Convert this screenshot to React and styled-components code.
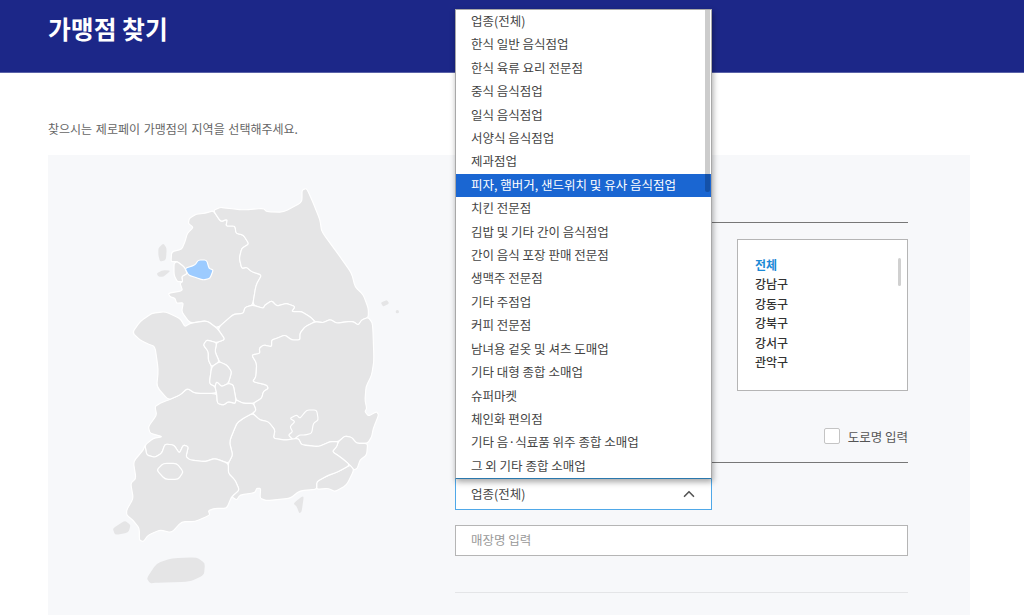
import styled, { createGlobalStyle } from "styled-components";
import { ChevronUp } from "lucide-react";

const Global = createGlobalStyle`
  html, body {
    margin: 0;
    height: 615px;
    overflow: hidden;
    background: #fff;
    font-family: "Noto Sans CJK KR", "Noto Sans", sans-serif;
  }
  * { box-sizing: border-box; }
`;

const Page = styled.div`
  width: 1024px;
  height: 615px;
  overflow: hidden;
`;

const Header = styled.header`
  height: 73px;
  padding: 10px 48px 0;
  background: #1c2788;
  border-bottom: 1px solid #5a62a8;
`;

const Title = styled.h1`
  margin: 0;
  font-size: 24.8px;
  line-height: 36px;
  font-weight: 700;
  color: #fff;
`;

const Intro = styled.p`
  margin: 0;
  padding: 46px 48px 0;
  height: 82px;
  font-size: 12px;
  line-height: 20px;
  word-spacing: 1px;
  color: #666;
`;

const Panel = styled.section`
  display: flex;
  width: 922px;
  height: 460px;
  margin-left: 48px;
  background: #f7f8fa;
`;

const MapColumn = styled.div`
  width: 407px;
  padding: 15px 0 0 52px;
`;

const FormColumn = styled.div`
  width: 453px;
  padding-top: 67px;
`;

const Section = styled.div`
  border-top: 1px solid #777;
`;

const ListRow = styled.div`
  display: flex;
  justify-content: space-between;
  padding-top: 16px;
`;

const ListBox = styled.div`
  position: relative;
  width: ${(p) => p.$width}px;
  height: 152px;
  padding: 15px 17px;
  background: #fff;
  border: 1px solid #b5b5b5;
`;

const ListItem = styled.div`
  font-size: 12px;
  line-height: 19.4px;
  font-weight: ${(p) => (p.$active ? 700 : 500)};
  color: ${(p) => (p.$active ? "#1b8ad6" : "#333")};
`;

const ListThumb = styled.span`
  position: absolute;
  top: 18px;
  right: 6px;
  width: 3px;
  height: 28px;
  border-radius: 2px;
  background: #d0d0d0;
`;

const CheckRow = styled.label`
  display: flex;
  justify-content: flex-end;
  align-items: center;
  gap: 8px;
  height: 71px;
  padding-top: 19px;
  font-size: 12.5px;
  color: #555;
`;

const CheckBox = styled.span`
  width: 16px;
  height: 16px;
  background: #fff;
  border: 1px solid #c4c4c4;
  border-radius: 2px;
`;

const SelectWrap = styled.div`
  position: relative;
  width: 257px;
  margin-top: 16px;
`;

const SelectButton = styled.div`
  display: flex;
  align-items: center;
  justify-content: space-between;
  height: 31px;
  padding: 0 13px 1px 15px;
  background: #fff;
  border: 1px solid #4fa8e8;
  border-top: none;
  font-size: 12.5px;
  color: #444;
`;

const Dropdown = styled.div`
  position: absolute;
  left: 0;
  right: 0;
  bottom: 100%;
  height: 470px;
  background: #fff;
  border: 1px solid #a8a8a8;
  border-bottom-color: #2a78ad;
  box-shadow: 1px 3px 6px rgba(0, 0, 0, 0.35);
  overflow: hidden;
`;

const Option = styled.div`
  height: 23.42px;
  padding-left: 15px;
  font-size: 12.5px;
  line-height: 22px;
  white-space: nowrap;
  color: ${(p) => (p.$selected ? "#fff" : "#444")};
  background: ${(p) => (p.$selected ? "#1a66d2" : "transparent")};
`;

const DropThumb = styled.span`
  position: absolute;
  top: 0;
  right: 1px;
  width: 5px;
  height: 182px;
  border-radius: 0 0 2px 2px;
  background: rgba(0, 0, 0, 0.2);
`;

const TextField = styled.input`
  display: block;
  width: 100%;
  height: 31px;
  margin-top: 15px;
  padding: 0 15px 2px;
  background: #fff;
  border: 1px solid #b5b5b5;
  outline: none;
  font-family: inherit;
  font-size: 12.5px;

  &::placeholder {
    color: #999;
  }
`;

const SoftRule = styled.hr`
  height: 1px;
  margin: 36px 0 0;
  border: 0;
  background: #e4e5e7;
`;

const options = [
  "업종(전체)",
  "한식 일반 음식점업",
  "한식 육류 요리 전문점",
  "중식 음식점업",
  "일식 음식점업",
  "서양식 음식점업",
  "제과점업",
  "피자, 햄버거, 샌드위치 및 유사 음식점업",
  "치킨 전문점",
  "김밥 및 기타 간이 음식점업",
  "간이 음식 포장 판매 전문점",
  "생맥주 전문점",
  "기타 주점업",
  "커피 전문점",
  "남녀용 겉옷 및 셔츠 도매업",
  "기타 대형 종합 소매업",
  "슈퍼마켓",
  "체인화 편의점",
  "기타 음·식료품 위주 종합 소매업",
  "그 외 기타 종합 소매업",
];

const districts = ["전체", "강남구", "강동구", "강북구", "강서구", "관악구"];

const regions = [
  // 경기
  "340,122 315,130 290,132 268,145 265,160 280,172 262,190 255,215 245,238 215,245 213,275 232,275 252,290 262,310 245,320 248,335 240,340 248,362 205,370 210,380 225,385 230,400 250,398 245,425 270,460 320,452 352,475 400,433 430,430 435,412 458,405 468,345 485,315 455,305 440,292 425,295 418,265 425,235 447,222 430,195 408,190 405,168 378,168 382,148 362,155",
  // 강원
  "340,122 360,112 385,115 430,120 490,115 500,125 550,127 600,100 606,90 606,60 620,55 640,100 660,150 665,185 720,260 755,310 765,350 790,375 805,415 805,442 785,450 775,465 760,455 740,455 710,460 690,448 670,458 645,455 630,440 605,425 575,425 585,410 560,400 530,408 515,392 495,405 490,415 458,405 468,345 485,315 455,305 440,292 425,295 418,265 425,235 447,222 430,195 408,190 405,168 378,168 382,148 362,155",
  // 충북
  "352,475 400,433 430,430 435,412 458,405 490,415 495,405 515,392 530,408 560,400 585,410 575,425 605,425 630,440 645,455 615,470 600,490 600,510 575,510 555,495 530,505 515,510 515,530 490,525 478,535 480,550 455,555 470,580 468,620 458,635 500,645 505,655 490,665 485,685 460,700 430,700 408,690 400,645 385,640 395,605 380,585 360,578 345,545 350,518 375,508",
  // 경북
  "645,455 670,458 690,448 710,460 740,455 760,455 775,465 785,450 805,442 818,460 822,570 815,615 798,650 795,690 800,715 795,725 805,738 830,725 836,735 820,775 815,800 803,820 770,820 755,802 735,798 715,815 690,815 655,830 615,825 605,825 595,805 555,810 520,805 525,780 505,755 480,750 458,730 468,720 460,700 485,685 490,665 505,655 500,645 458,635 468,620 470,580 455,555 480,550 478,535 490,525 515,530 515,510 530,505 555,495 575,510 600,510 600,490 615,470",
  // 대구
  "570,745 590,735 600,745 620,720 650,720 655,750 640,760 635,790 615,795 598,795 580,810 565,795 578,785 570,770 585,755",
  // 울산
  "715,815 735,798 755,802 770,820 803,820 800,855 780,870 772,895 762,900 750,885 720,860 697,845 710,830",
  // 부산
  "750,885 762,900 740,945 705,965 685,955 650,958 650,935 680,918 715,905",
  // 경남
  "458,730 480,750 505,755 525,780 520,805 555,810 595,805 605,825 655,830 690,815 715,815 710,830 697,845 720,860 750,885 715,905 680,918 650,935 650,958 600,962 570,985 500,992 480,985 482,955 470,955 465,968 420,975 410,990 395,980 418,960 405,930 385,910 385,880 398,855 388,815 410,760 430,745",
  // 전북
  "205,690 240,675 262,655 285,670 350,670 352,700 370,705 385,695 405,700 408,690 430,700 460,700 468,720 458,730 430,745 410,760 388,815 398,855 385,880 345,865 315,875 270,870 258,860 265,830 250,825 238,850 222,825 195,822 185,850 165,862 140,855 135,825 160,805 188,800 150,790 145,770 170,735 165,710 180,700",
  // 전남
  "135,825 140,855 165,862 185,850 195,822 222,825 238,850 250,825 265,830 258,860 270,870 315,875 345,865 385,880 385,910 405,930 418,960 395,980 380,1015 345,1015 325,1022 330,1035 285,1055 245,1055 215,1088 180,1080 145,1095 130,1115 118,1110 118,1075 100,1052 80,1035 80,1020 100,985 92,940 108,925 100,875 130,840",
  // 광주
  "170,900 190,880 230,880 250,905 235,928 195,928",
  // 충남
  "97,488 120,455 155,430 195,425 240,445 255,470 270,460 320,452 352,475 375,508 350,518 320,510 310,525 325,545 325,570 335,590 328,640 345,650 350,670 285,670 262,655 240,675 205,690 170,650 175,600 165,530 140,520 120,510",
  // 세종
  "350,518 345,545 358,575 335,590 325,570 325,545 310,525 320,510",
  // 대전
  "335,590 358,575 380,585 395,605 385,640 365,650 350,635 345,650 328,640",
  // 금산
  "385,640 400,645 408,690 405,700 385,695 370,705 352,700 350,670 345,650 350,635 365,650",
  // 인천
  "222,280 232,275 252,290 262,310 245,320 248,335 232,335 222,315",
];

const islands = [
  "175,235 190,220 200,235 198,270 180,275 175,255",
  "170,310 190,300 212,302 190,320 175,320",
  "842,398 860,390 868,400 850,410",
  "580,1000 612,975 605,1025 598,1030 590,1010",
  "38,1075 75,1052 92,1065 85,1088 45,1095",
  "140,1225 170,1180 215,1165 290,1162 315,1180 312,1215 270,1235 170,1238 150,1240",
];

const seoul = "255,295 285,285 295,270 320,270 327,295 340,300 330,325 310,330 285,322 265,315";

// 꼭짓점만 살짝 둥글게 깎아서 윤곽선을 유지한다
const smooth = (str) => {
  const pts = str.split(" ").map((p) => p.split(",").map(Number));
  const lerp = (a, b, t) => [a[0] + (b[0] - a[0]) * t, a[1] + (b[1] - a[1]) * t];
  let d = "";
  pts.forEach((p, i) => {
    const prev = pts[(i - 1 + pts.length) % pts.length];
    const next = pts[(i + 1) % pts.length];
    const a = lerp(p, prev, 0.25);
    const b = lerp(p, next, 0.25);
    d += `${i === 0 ? "M" : "L"}${a[0]} ${a[1]}Q${p[0]} ${p[1]} ${b[0]} ${b[1]}`;
  });
  return d + "Z";
};

const KoreaMap = () => (
  <svg width="320" height="445" viewBox="0 0 960 1335">
    <g fill="#e5e5e6">
      {islands.map((p) => (
        <path key={p} d={smooth(p)} />
      ))}
      <circle cx="892" cy="425" r="5" />
    </g>
    <g fill="#e5e5e6" stroke="#fff" strokeWidth="3.5" strokeLinejoin="round">
      {regions.map((p) => (
        <path key={p} d={smooth(p)} />
      ))}
      <path d={smooth(seoul)} fill="#9ccbff" />
    </g>
  </svg>
);

export default function App() {
  return (
    <Page>
      <Global />
      <Header>
        <Title>가맹점 찾기</Title>
      </Header>
      <Intro>찾으시는 제로페이 가맹점의 지역을 선택해주세요.</Intro>
      <Panel>
        <MapColumn>
          <KoreaMap />
        </MapColumn>
        <FormColumn>
          <Section>
            <ListRow>
              <ListBox $width={257} />
              <ListBox $width={171}>
                {districts.map((d, i) => (
                  <ListItem key={d} $active={i === 0}>
                    {d}
                  </ListItem>
                ))}
                <ListThumb />
              </ListBox>
            </ListRow>
            <CheckRow>
              <CheckBox />
              도로명 입력
            </CheckRow>
          </Section>
          <Section>
            <SelectWrap>
              <Dropdown>
                {options.map((o, i) => (
                  <Option key={o} $selected={i === 7}>
                    {o}
                  </Option>
                ))}
                <DropThumb />
              </Dropdown>
              <SelectButton>
                업종(전체)
                <ChevronUp size={18} strokeWidth={2.2} color="#555" />
              </SelectButton>
            </SelectWrap>
            <TextField placeholder="매장명 입력" />
            <SoftRule />
          </Section>
        </FormColumn>
      </Panel>
    </Page>
  );
}
